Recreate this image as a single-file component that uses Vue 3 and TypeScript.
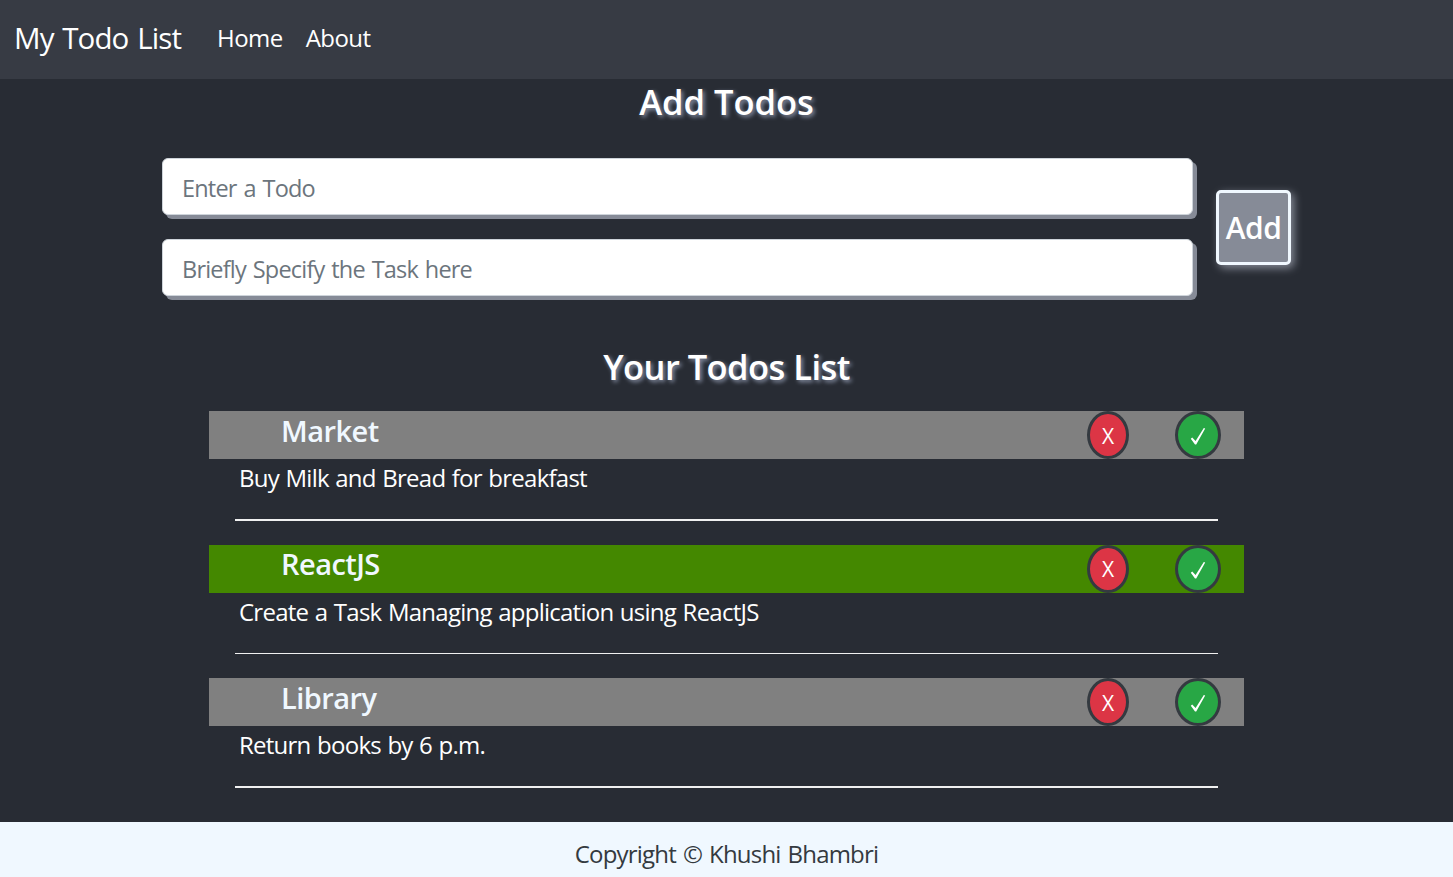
<script setup lang="ts">
interface Todo { title: string; desc: string; done: boolean }
const todos: Todo[] = [
  { title: 'Market', desc: 'Buy Milk and Bread for breakfast', done: false },
  { title: 'ReactJS', desc: 'Create a Task Managing application using ReactJS', done: true },
  { title: 'Library', desc: 'Return books by 6 p.m.', done: false },
]
</script>

<template>
  <div class="page">
    <nav class="navbar">
      <a class="brand">My Todo List</a>
      <a class="link">Home</a>
      <a class="link">About</a>
    </nav>
    <main class="main">
      <h2 class="heading first">Add Todos</h2>
      <form class="form" @submit.prevent>
        <div class="fields">
          <input class="field" placeholder="Enter a Todo" />
          <input class="field" placeholder="Briefly Specify the Task here" />
        </div>
        <button class="add" type="button">Add</button>
      </form>
      <h2 class="heading second">Your Todos List</h2>
      <ul class="list">
        <li v-for="t in todos" :key="t.title" class="item">
          <div class="head" :class="{ done: t.done }">
            <h3 class="title">{{ t.title }}</h3>
            <button class="round red" type="button">X</button>
            <button class="round green" type="button" aria-label="done">
              <svg class="tick" width="16" height="18" viewBox="0 0 16 18">
                <path d="M0.8 11.8 L2.2 10.6 L5.6 14 L13.8 1 L15.2 1.4 L6.2 17.4 L5 17.4 Z" fill="#fff" />
              </svg>
            </button>
          </div>
          <p class="desc">{{ t.desc }}</p>
          <div class="rule"></div>
        </li>
      </ul>
    </main>
    <footer class="footer">Copyright © Khushi Bhambri</footer>
  </div>
</template>

<style>
html, body { margin: 0; background: #282c34; }
</style>

<style scoped>
.page {
  min-height: 877px;
  display: flex;
  flex-direction: column;
  background: #282c34;
  color: #fff;
  font-family: "Open Sans", "Noto Sans", sans-serif;
  letter-spacing: -0.55px;
}
.navbar {
  height: 79px;
  box-sizing: border-box;
  display: flex;
  align-items: center;
  padding: 0 14px 4px;
  background: #373b44;
}
.brand { font-size: 29.5px; margin-right: 25px; letter-spacing: -0.9px; word-spacing: 2px; }
.link { font-size: 24px; padding: 0 11px; }
.link + .link { padding-left: 12px; }
.main { flex: 1; display: flex; flex-direction: column; }
.heading {
  margin: 1px 0 0;
  height: 44px;
  line-height: 44px;
  text-align: center;
  font-size: 34.5px;
  font-weight: 600;
  text-shadow: 2px 2px 4px #8a93a8;
}
.first { letter-spacing: 0; }
.form {
  margin: 34px 162px 0;
  display: flex;
  align-items: center;
  width: 1129px;
}
.fields { width: 1031px; display: flex; flex-direction: column; gap: 24px; }
.field {
  height: 57px;
  box-sizing: border-box;
  padding: 2px 19px 0;
  border: 1px solid #ced4da;
  border-radius: 6px;
  background: #fff;
  box-shadow: 4px 4px 0 #868b97;
  font: inherit;
  letter-spacing: -0.8px;
  word-spacing: 1.5px;
  font-size: 23.5px;
}
.field::placeholder { color: #6c757d; opacity: 1; }
.add {
  margin-left: 23px;
  width: 75px;
  height: 75px;
  box-sizing: border-box;
  border: 3px solid #f0f8ff;
  border-radius: 5px;
  background: #868b97;
  color: #fff;
  padding: 0;
  font: inherit;
  letter-spacing: inherit;
  font-size: 30px;
  font-weight: 600;
  box-shadow: 3px 3px 8px #868b97;
}
.second { margin-top: 49px; }
.list { list-style: none; margin: 22px 209px 0; padding: 0; }
.item { height: 133.5px; }
.head {
  height: 48px;
  display: flex;
  align-items: center;
  background: #808080;
  padding-left: 72px;
}
.head.done { background: #448800; }
.title {
  margin: 0 auto 10px 0;
  font-size: 29px;
  font-weight: 600;
  color: #f0f8ff;
}
.round {
  box-sizing: border-box;
  height: 48px;
  padding: 2px 0 0;
  border: 3px solid #343a40;
  border-radius: 50%;
  color: #fff;
  font: inherit;
  font-size: 21px;
  line-height: 1;
}
.red { width: 42px; background: #dc3545; }
.green { width: 46px; margin-left: 46px; margin-right: 23px; padding: 0; background: #28a745; }
.tick { display: block; margin: 2px auto 0; }
.desc {
  margin: 3px 0 0 30px;
  height: 32px;
  line-height: 32px;
  font-size: 24px;
  letter-spacing: -0.75px;
  word-spacing: 1px;
}
.rule {
  margin: 25px 26px 0;
  height: 1.5px;
  background: #f0f0f0;
}
.footer {
  height: 55px;
  line-height: 63px;
  text-align: center;
  background: #f0f8ff;
  color: #343a40;
  font-size: 24px;
  letter-spacing: -0.8px;
  word-spacing: 1.5px;
}
</style>
